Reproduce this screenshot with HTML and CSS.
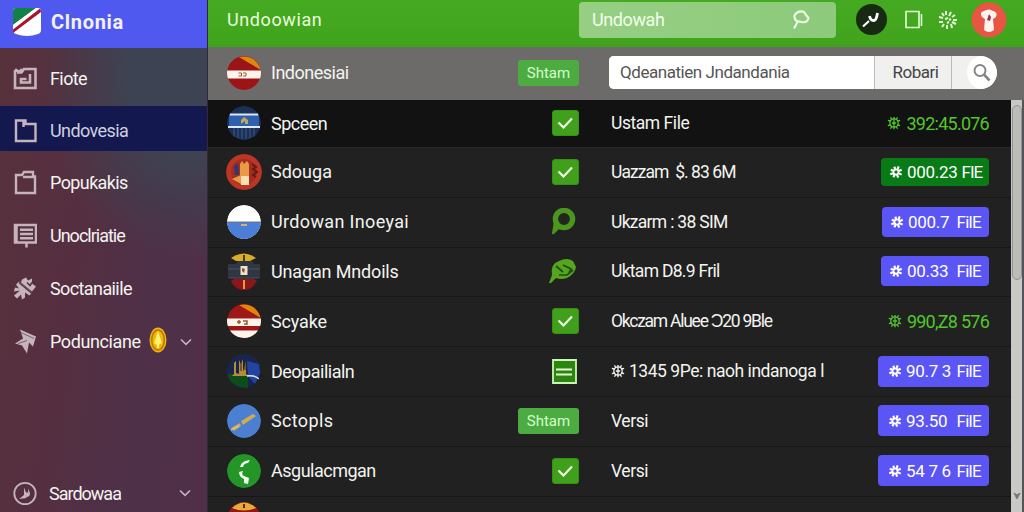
FILE: index.html
```
<!DOCTYPE html>
<html lang="id">
<head>
    <meta charset="UTF-8">
    <meta name="viewport" content="width=device-width, initial-scale=1.0">
    <title>Clnonia</title>
    <link rel="stylesheet" href="styles.css">
</head>
<body>
    <!-- Shared icons -->
    <svg class="sprite">
        <symbol id="check" viewBox="0 0 27 26">
            <rect x="0.5" y="0.5" width="26" height="25" rx="2.5" fill="#41a01b" stroke="#379114"/>
            <path d="M6.5 12.5l5 5L20 8.5" fill="none" stroke="#f2ffe9" stroke-width="2.2"/>
        </symbol>
        <symbol id="gear" viewBox="0 0 16 16">
            <circle cx="8" cy="8" r="4.8" fill="none" stroke="currentColor" stroke-width="1.4"/>
            <path d="M8 1v14M1 5l3.500 1M15 5l-3.500 1M1 11l3.500-1M15 11l-3.500-1M4 1.500l1.500 2.800M12 1.500l-1.500 2.800M4 14.500l1.500-2.800M12 14.500l-1.500-2.800M5.500 8h5" fill="none" stroke="currentColor" stroke-width="1.500"/>
        </symbol>
        <symbol id="flower" viewBox="0 0 16 16">
            <path d="M6 2l1.5 4M11 1.5L9.5 6M14.5 5.5L10 7.5M14.5 11L10 9M10.5 14.5L9 10.5M5 14l2-4M1.5 10.5L6 9M2 5.5L6 7" fill="none" stroke="currentColor" stroke-width="2.500"/>
            <circle cx="8" cy="8" r="2.8" fill="none" stroke="currentColor" stroke-width="1.6"/>
        </symbol>
        <symbol id="chevron" viewBox="0 0 12 8">
            <path d="M1 1.5l5 4.8 5-4.8" fill="none" stroke="currentColor" stroke-width="1.6"/>
        </symbol>
    </svg>

    <div class="app">
        <aside class="sidebar">
            <div class="brand">
                <svg class="logo" viewBox="0 0 30 30">
                    <path d="M4 1h22q3 0 3 3v19q0 3-3 4-11 4-22 0-3-1-3-4V4q0-3 3-3z" fill="#fff"/>
                    <path d="M4 1h20L1 18V4q0-3 3-3z" fill="#138046"/>
                    <path d="M1 18L24 1h2L1 20z" fill="#fff"/>
                    <path d="M1 22.5L28 1.5q1 1 1 3.500L1 26z" fill="#a5162a"/>
                </svg>
                <span>Clnonia</span>
            </div>
            <nav class="menu">
                <a class="item first">
                    <svg class="icon" viewBox="0 0 24 24"><path d="M2 3.500V21.500H22.500V2.500H11L8.500 6H4M9 2.500L6.500 5.500 2 3M17 7.500V16H8v-3.500h5.500" fill="none" stroke="currentColor" stroke-width="2.600"/></svg>
                    <span>Fiote</span>
                </a>
                <a class="item active">
                    <svg class="icon" viewBox="0 0 24 24"><path d="M3 2H12.500V5.500H22.500V22.500H3zM10.500 1v7.500" fill="none" stroke="currentColor" stroke-width="2.400"/></svg>
                    <span>Undovesia</span>
                </a>
                <a class="item">
                    <svg class="icon" viewBox="0 0 24 24"><path d="M3 4.500H9L11 1.500H20V6H22V22.500H3zM10 6.500H22" fill="none" stroke="currentColor" stroke-width="2.400"/></svg>
                    <span>Popuƙakis</span>
                </a>
                <a class="item">
                    <svg class="icon" viewBox="0 0 24 24"><path d="M2 1.500H23V19H2zM3.500 1.500V19M7 6.300h13M7 10.500h13M7 14.700h13M13.500 19v5" fill="none" stroke="currentColor" stroke-width="2.500"/></svg>
                    <span class="tight">Unoclriatie</span>
                </a>
                <a class="item">
                    <svg class="icon" viewBox="0 0 24 24"><path d="M3 8l3-3 13 11-2.500 3-4.500-3v5l-3 2-1-5-4 4-3-3 6-5-6 1 1-4 4 1z" fill="currentColor"/><path d="M9 3l4-2 2 3 4-2v5l4 3-4 5L8 6z" fill="currentColor"/><path d="M6 6l13 11M14 6l3 3 2-3" fill="none" stroke="#56303f" stroke-width="1.500"/></svg>
                    <span>Soctanaiile</span>
                </a>
                <a class="item">
                    <svg class="icon" viewBox="0 0 24 24"><path d="M7 0l16 7-3 10-4-4-2 11-5-8-7-2 8-5z" fill="currentColor"/><path d="M8 3l13 6M5 14l9-3" stroke="#75616c" stroke-width="1"/></svg>
                    <span class="loose">Podunciane</span>
                    <svg class="coin" viewBox="0 0 18 26"><ellipse cx="9" cy="13" rx="8.500" ry="12.500" fill="#efb50b"/><ellipse cx="9" cy="13" rx="6.300" ry="10" fill="none" stroke="#b97700" stroke-width="1.500"/><path d="M9 4l4 12-3 2v3H8v-3l-3-2z" fill="#fff36d"/></svg>
                    <svg class="chevron"><use href="#chevron"/></svg>
                </a>
            </nav>
            <div class="item account">
                <svg class="icon" viewBox="0 0 24 24"><circle cx="12" cy="12" r="10.700" fill="none" stroke="currentColor" stroke-width="1.800"/><path d="M6 17.500l5-4V6l2 5h2l.500-4 1.500 5q0 3-3 3.500-2 2-5 1.500z" fill="currentColor"/></svg>
                <span class="tight">Sardowaa</span>
                <svg class="chevron"><use href="#chevron"/></svg>
            </div>
        </aside>

        <main class="main">
            <header class="topbar">
                <h1>Undoowian</h1>
                <div class="top-search">
                    <span>Undowah</span>
                    <svg viewBox="0 0 18 20"><path d="M2 18.500L5.500 12Q1 8 3 4.500 7 0 12 2q1 2 4.500 6-1 5-7 4L5 11" fill="none" stroke="currentColor" stroke-width="2"/></svg>
                </div>
                <svg class="tool" viewBox="0 0 31 31"><circle cx="15.500" cy="15.500" r="15.500" fill="#172b12"/><path d="M7 22.500l6-5.500" stroke="#fff" stroke-width="2.200"/><path d="M13.500 12q1 4.500 4 4.500t4-7.500" fill="none" stroke="#fff" stroke-width="2.800"/></svg>
                <svg class="book" viewBox="0 0 18 20"><path d="M1 1.500h13v16H1zM16.500 4v12" fill="none" stroke="#e5ffd9" stroke-width="1.600"/></svg>
                <svg class="spark" viewBox="0 0 20 20"><path d="M4 3l2 3M8 1v4M13 2l-2 4M17 5l-3 2M1 7l4 1M1 12h4M19 10h-4M18 14l-4-2M4 17l2-3M9 19v-4M14 18l-1-4M7 9l3-1M11 10l2-1M9 13l2-1" fill="none" stroke="#e5ffd9" stroke-width="2"/></svg>
                <svg class="profile" viewBox="0 0 36 36"><circle cx="18" cy="18" r="17.500" fill="#e75543"/><path d="M11 15q-3-5 2-6 5-3 9 0 5 1 3 6l-3 2 1 11q-5 4-10 0l1-11z" fill="#fff4ef"/><path d="M18 12l2 3-1 4-3-1z" fill="#a62d46"/></svg>
            </header>

            <section class="filter row">
                <svg class="flag" viewBox="0 0 34 34"><circle cx="17" cy="17" r="17" fill="#9d1418"/><path d="M12 1Q28-2 34 14L22 7z" fill="#df870c"/><path d="M0 14.500h34v8H0z" fill="#fff4ec"/><path d="M11.500 17h3v3h-3M16 17h3v3h-3" fill="none" stroke="#9a612f"/></svg>
                <span class="name narrow">Indonesiai</span>
                <span class="status"><b class="tag">Shtam</b></span>
                <div class="search">
                    <span class="query">Qdeanatien Jndandania</span>
                    <span class="option">Robari</span>
                    <span class="go"><svg viewBox="0 0 30 33"><circle cx="13" cy="14.500" r="5.500" fill="none" stroke="#858585" stroke-width="2"/><path d="M17 18.500l5.500 6" stroke="#858585" stroke-width="2.600"/></svg></span>
                </div>
            </section>

            <div class="content">
                <div class="list">
                    <div class="row dark">
                        <svg class="flag" viewBox="0 0 34 34"><circle cx="17" cy="17" r="17" fill="#1c3057"/><path d="M2 8h30v12H2z" fill="#2e60ae"/><path d="M3 8.500h28M1 21h32" stroke="#dce8f8" stroke-width="2"/><path d="M7 22v9M11 22v10M15 22v11M19 22v11M23 22v10M27 22v9" stroke="#3d5a88"/><path d="M14 18v-4l3-3 4 3v4h-3v-3z" fill="#c0a85b"/></svg>
                        <span class="name narrow">Spceen</span>
                        <span class="status"><svg class="check"><use href="#check"/></svg></span>
                        <span class="detail">Ustam File</span>
                        <span class="sum"><svg class="gear"><use href="#gear"/></svg>392:45.076</span>
                    </div>
                    <div class="row">
                        <svg class="flag big" viewBox="0 0 36 36"><circle cx="18" cy="18" r="18" fill="#bd3526"/><circle cx="18" cy="18" r="13" fill="#a52c20"/><path d="M14 10l2-3 2 3 3-3 2 3v12h-9zM6 25l9-4v9z" fill="#e99a45"/><path d="M15 22h8v9h-8z" fill="#ffdfb2"/><path d="M8 12l4-3 1 12H9z" fill="#31386f"/><path d="M26 10l4 3-3 2 4 3-4 3 3 2" fill="none" stroke="#601d16" stroke-width="2"/></svg>
                        <span class="name">Sdouga</span>
                        <span class="status"><svg class="check"><use href="#check"/></svg></span>
                        <span class="detail squeezed">Uazzam  $. 83 6M</span>
                        <span class="sum pill green"><svg class="gear"><use href="#flower"/></svg>000.23<em>FlE</em></span>
                    </div>
                    <div class="row">
                        <svg class="flag" viewBox="0 0 34 34"><circle cx="17" cy="17" r="17" fill="#fff"/><path d="M0 17h34a17 17 0 01-34 0z" fill="#4a7ed8"/><path d="M0 17h34" stroke="#75766b"/><path d="M14 19h6v2h-6z" fill="#d5b46a"/></svg>
                        <span class="name wider">Urdowan Inoeyai</span>
                        <span class="status"><svg class="pin" viewBox="0 0 28 28"><path d="M3.500 10L1 25q0 2 2 1l6-6z" fill="#49981d"/><circle cx="13" cy="11" r="8.600" fill="#22261f" stroke="#49981d" stroke-width="5.400"/></svg></span>
                        <span class="detail medium">Ukzarm : 38 SIM</span>
                        <span class="sum pill"><svg class="gear"><use href="#flower"/></svg>000.7<em>FilE</em></span>
                    </div>
                    <div class="row">
                        <svg class="flag tall" viewBox="0 0 34 38"><path d="M4 6Q17-3 29 6L23 9H9z" fill="#d9ad25"/><path d="M17 3v6" stroke="#4d3a0d" stroke-width="2"/><path d="M1 12h8l2-3h14l2 3h6v14H1z" fill="#303743"/><path d="M1 17h32M2 26h30" stroke="#46535e"/><path d="M7 27h20q2 2 3 1-4 10-13 10T4 29z" fill="#8c171b"/><path d="M13.500 14h7v9h-7z" fill="#eee2c8"/><path d="M15 16l3 1-1 4-2-2z" fill="#9c4d2f"/><path d="M17 28v9" stroke="#ef9637" stroke-width="2"/></svg>
                        <span class="name snug">Unagan Mndoils</span>
                        <span class="status"><svg class="leaf" viewBox="0 0 30 28"><path d="M0 26L3 18Q1 7 10 4q8-4 14 0l3 6q-1 7-9 11-6 2-11 0l-5 5z" fill="#55a51f"/><path d="M7 9l7 6M14 8l8 4-2 4M10 18h8l6-5" fill="none" stroke="#234b13" stroke-width="1.700"/></svg></span>
                        <span class="detail medium">Uktam D8.9 Fril</span>
                        <span class="sum pill wide"><svg class="gear"><use href="#flower"/></svg>00.33<em>FilE</em></span>
                    </div>
                    <div class="row">
                        <svg class="flag" viewBox="0 0 34 34"><circle cx="17" cy="17" r="17" fill="#a01717"/><path d="M12 1Q28-2 34 14L22 7z" fill="#df870c"/><path d="M0 14.500h34v7.500H0zM1 26.500h32Q28 34 17 34T1 26.500z" fill="#fff4ec"/><path d="M10 18h4M12 16v4M16 17h4v3h-3" fill="none" stroke="#925c2b" stroke-width="1.500"/></svg>
                        <span class="name snug">Scyake</span>
                        <span class="status"><svg class="check"><use href="#check"/></svg></span>
                        <span class="detail crowded">Okczam Aluee Ɔ20 9Ble</span>
                        <span class="sum"><svg class="gear"><use href="#gear"/></svg>990,Z8 576</span>
                    </div>
                    <div class="row">
                        <svg class="flag" viewBox="0 0 34 34"><circle cx="17" cy="17" r="17" fill="#17254f"/><path d="M0 20h21v14Q3 33 0 20z" fill="#0c4d1a"/><path d="M20 7l12 3 1 9-5 11-7-8z" fill="#2544a0"/><path d="M7 20V9l2-2v12l3 1V6l2 4 2-5v13l3-11v13l3 2H5z" fill="#b78c39"/><path d="M14 17V7M18 16V7" stroke="#3c2014"/><path d="M20 22q8-1 12 3" fill="none" stroke="#dfe9ef" stroke-width="1.500"/></svg>
                        <span class="name narrow">Deopailialn</span>
                        <span class="status"><svg class="note" viewBox="0 0 25 25"><path d="M1 1h23v23H1z" fill="#2b850e" stroke="#cbf5b4" stroke-width="1.800"/><path d="M4 10.500h16M4 15.500h16" stroke="#e1ffd2" stroke-width="2"/></svg></span>
                        <span class="detail"><svg class="gear"><use href="#gear"/></svg> 1345 9Pe: naoh indanoga l</span>
                        <span class="sum pill large"><svg class="gear"><use href="#flower"/></svg>90.7 3<em>FilE</em></span>
                    </div>
                    <div class="row">
                        <svg class="flag" viewBox="0 0 34 34"><circle cx="17" cy="17" r="17" fill="#4a7fd2"/><path d="M4 24l9-5 1 3-7 5M14 17l12-7 3 2-13 9z" fill="#d3aa53"/><path d="M4 26l8-4" stroke="#e9ce7e"/></svg>
                        <span class="name wider">Sctopls</span>
                        <span class="status"><b class="tag">Shtam</b></span>
                        <span class="detail">Versi</span>
                        <span class="sum pill large"><svg class="gear"><use href="#flower"/></svg>93.50<em>FilE</em></span>
                    </div>
                    <div class="row">
                        <svg class="flag" viewBox="0 0 34 34"><circle cx="17" cy="17" r="17" fill="#249627"/><path d="M13 13q1-6 10-7l-2 3q-4 0-5 4zM12 18l4-1q-2 4 1 5l5 2-1 6-4-1v-4q-5-2-5-7z" fill="#f3fff1"/></svg>
                        <span class="name narrow">Asgulacmgan</span>
                        <span class="status"><svg class="check"><use href="#check"/></svg></span>
                        <span class="detail">Versi</span>
                        <span class="sum pill large"><svg class="gear"><use href="#flower"/></svg>54 7 6<em>FilE</em></span>
                    </div>
                    <div class="row last">
                        <svg class="flag" viewBox="0 0 34 34"><circle cx="17" cy="17" r="17" fill="#941515"/><path d="M5 6Q17-5 29 6 17 11 5 6z" fill="#e5ad35"/><path d="M17 2v4" stroke="#682015" stroke-width="2"/></svg>
                    </div>
                </div>
                <div class="scrollbar">
                    <div class="thumb"></div>
                    <svg viewBox="0 0 8 8"><path d="M1 1l3 6 3-6-3 2z" fill="#777" stroke="#777"/></svg>
                </div>
            </div>
        </main>
    </div>
</body>
</html>
```
FILE: styles.css
```
/* General Styles */
* {
    box-sizing: border-box;
}
body {
    margin: 0;
    font-family: Roboto, "Liberation Sans", sans-serif;
    font-size: 18px;
    color: #f4f4f0;
    overflow: hidden;
}
svg {
    display: block;
    flex-shrink: 0;
}
span {
    white-space: nowrap;
}
.sprite {
    display: none;
}
.app {
    display: flex;
    width: 1024px;
    height: 512px;
    background: #212121;
}

/* Sidebar */
.sidebar {
    width: 208px;
    display: flex;
    flex-direction: column;
    background:
        radial-gradient(ellipse 150px 185px at 190px 75px, #3d4352 40%, rgba(61, 67, 82, 0) 100%),
        linear-gradient(97deg, #57313b 0%, #552f40 38%, #4e3048 68%, #503049 100%);
    border-right: 1px solid #33283b;
}
.brand {
    height: 48px;
    display: flex;
    align-items: center;
    gap: 9px;
    padding: 0 0 4px 12px;
    background: #5059ef;
    font-size: 20px;
    font-weight: 700;
    letter-spacing: 0.7px;
    color: #f2f2ff;
}
.logo {
    width: 30px;
    height: 30px;
}
.menu {
    flex: 1;
}
.item {
    height: 53px;
    display: flex;
    align-items: center;
    padding-left: 13px;
    gap: 13px;
    letter-spacing: -0.6px;
}
.item .tight {
    letter-spacing: -1px;
}
.item .loose {
    letter-spacing: -0.4px;
}
.item.first {
    height: 58px;
    padding-top: 3px;
}
.item.active {
    height: 45px;
    margin-bottom: 5px;
    padding-top: 4px;
    background: #13194f;
    color: #cfcfe0;
}
.icon {
    width: 24px;
    height: 25px;
    color: #c5b4bd;
}
.coin {
    width: 18px;
    height: 26px;
    margin: -4px 0 0 -5px;
}
.chevron {
    width: 12px;
    height: 8px;
    margin-right: 16px;
    margin-left: auto;
    color: #c9b3c6;
}
.account {
    height: 38px;
    gap: 12px;
}

/* Top bar */
.main {
    flex: 1;
    display: flex;
    flex-direction: column;
    min-width: 0;
}
.topbar {
    height: 47px;
    display: flex;
    align-items: center;
    padding: 0 17px 8px 19px;
    background: linear-gradient(#45aa21, #40a31c);
}
h1 {
    width: 352px;
    margin: 0;
    font-size: 18px;
    font-weight: 400;
    color: #e9ffdc;
    letter-spacing: 0.6px;
}
.top-search {
    width: 257px;
    height: 36px;
    display: flex;
    align-items: center;
    justify-content: space-between;
    padding: 0 26px 0 13px;
    border-radius: 4px;
    background: linear-gradient(90deg, #96cf84, #8dca7b);
    color: #f1ffe9;
    letter-spacing: -0.4px;
}
.top-search svg {
    width: 18px;
    height: 20px;
}
.tool {
    width: 31px;
    height: 31px;
    margin-left: 20px;
}
.book {
    width: 18px;
    height: 20px;
    margin-left: 18px;
}
.spark {
    width: 20px;
    height: 20px;
    margin-left: 15px;
}
.profile {
    width: 36px;
    height: 36px;
    margin-left: auto;
}

/* Rows */
.row {
    height: 49.8px;
    display: grid;
    grid-template-columns: 44px 240px 68px 32px 1fr auto;
    align-items: center;
    padding: 0 22px 1px 19px;
    border-bottom: 1px solid #171717;
}
.row.filter {
    height: 53px;
    padding: 0 27px 2px 19px;
    background: #6c6b6a;
    border: 0;
}
.row.dark {
    height: 48px;
    background: #121212;
    border-color: #2a2a2a;
}
.row.last {
    align-items: start;
    padding-top: 5px;
}
.flag {
    width: 34px;
    height: 34px;
    border-radius: 50%;
}
.flag.big {
    width: 36px;
    height: 36px;
    margin-left: -1px;
}
.flag.tall {
    height: 38px;
    border-radius: 0;
}
.name.narrow {
    letter-spacing: -0.5px;
}
.name.snug {
    letter-spacing: -0.15px;
}
.name.wider {
    letter-spacing: 0.35px;
}
.status {
    display: flex;
    justify-content: flex-end;
}
.check {
    width: 27px;
    height: 26px;
}
.pin {
    width: 28px;
    height: 28px;
}
.leaf {
    width: 30px;
    height: 28px;
}
.note {
    width: 25px;
    height: 25px;
    margin-right: 2px;
}
.tag {
    width: 61px;
    height: 26px;
    border-radius: 3px;
    background: #4cac41;
    color: #d3ffc9;
    font-size: 15px;
    font-weight: 400;
    line-height: 26px;
    text-align: center;
}
.detail {
    grid-column: 5;
    display: flex;
    align-items: center;
    font-size: 17.5px;
    white-space: pre;
    letter-spacing: -0.45px;
}
.detail.medium {
    letter-spacing: -0.7px;
}
.detail.squeezed {
    letter-spacing: -0.95px;
}
.detail.crowded {
    letter-spacing: -1.25px;
}

/* Amounts */
.sum {
    display: flex;
    align-items: center;
    gap: 5px;
    color: #53c62d;
    letter-spacing: -0.75px;
    white-space: pre;
}
.gear {
    width: 14px;
    height: 16px;
}
.pill {
    width: 107px;
    height: 30px;
    gap: 4px;
    padding: 0 8px;
    border-radius: 4px;
    background: #5a55f4;
    color: #fff;
    font-size: 17px;
    letter-spacing: -0.3px;
}
.pill em {
    margin-left: auto;
    font-style: normal;
    letter-spacing: -0.7px;
}
.pill.green {
    width: 108px;
    height: 28px;
    background: #087b17;
}
.pill.wide {
    width: 108px;
}
.pill.large {
    width: 111px;
    height: 31px;
    padding-left: 10px;
}

/* Search in the filter row */
.search {
    grid-column: 5 / 7;
    width: 388px;
    height: 33px;
    margin-left: -2px;
    display: flex;
    border-radius: 5px 17px 17px 5px;
    overflow: hidden;
    background: #f0f0ee;
    color: #555;
    font-size: 17px;
    line-height: 33px;
}
.query {
    width: 266px;
    padding-left: 11px;
    background: #fff;
    border-right: 1px solid #bbb;
    letter-spacing: -0.45px;
}
.option {
    width: 77px;
    padding-left: 5px;
    border-right: 1px solid #bbb;
    text-align: center;
    color: #444;
    letter-spacing: -0.5px;
}
.go {
    flex: 1;
    padding-left: 15px;
}
.go svg {
    width: 30px;
    height: 33px;
    border-radius: 50%;
    background: #fff;
}

/* List and scrollbar */
.content {
    flex: 1;
    display: flex;
    min-height: 0;
}
.list {
    width: 803px;
    overflow: hidden;
}
.scrollbar {
    flex: 1;
    display: flex;
    flex-direction: column;
    justify-content: space-between;
    align-items: center;
    padding: 5px 0 12px;
    background: #c9cac6;
    border-right: 2px solid #555;
}
.thumb {
    width: 10px;
    height: 175px;
    border: 1px solid #92938f;
    border-radius: 5px;
    background: #bcbdb9;
}
.scrollbar svg {
    width: 8px;
    height: 8px;
}
```
